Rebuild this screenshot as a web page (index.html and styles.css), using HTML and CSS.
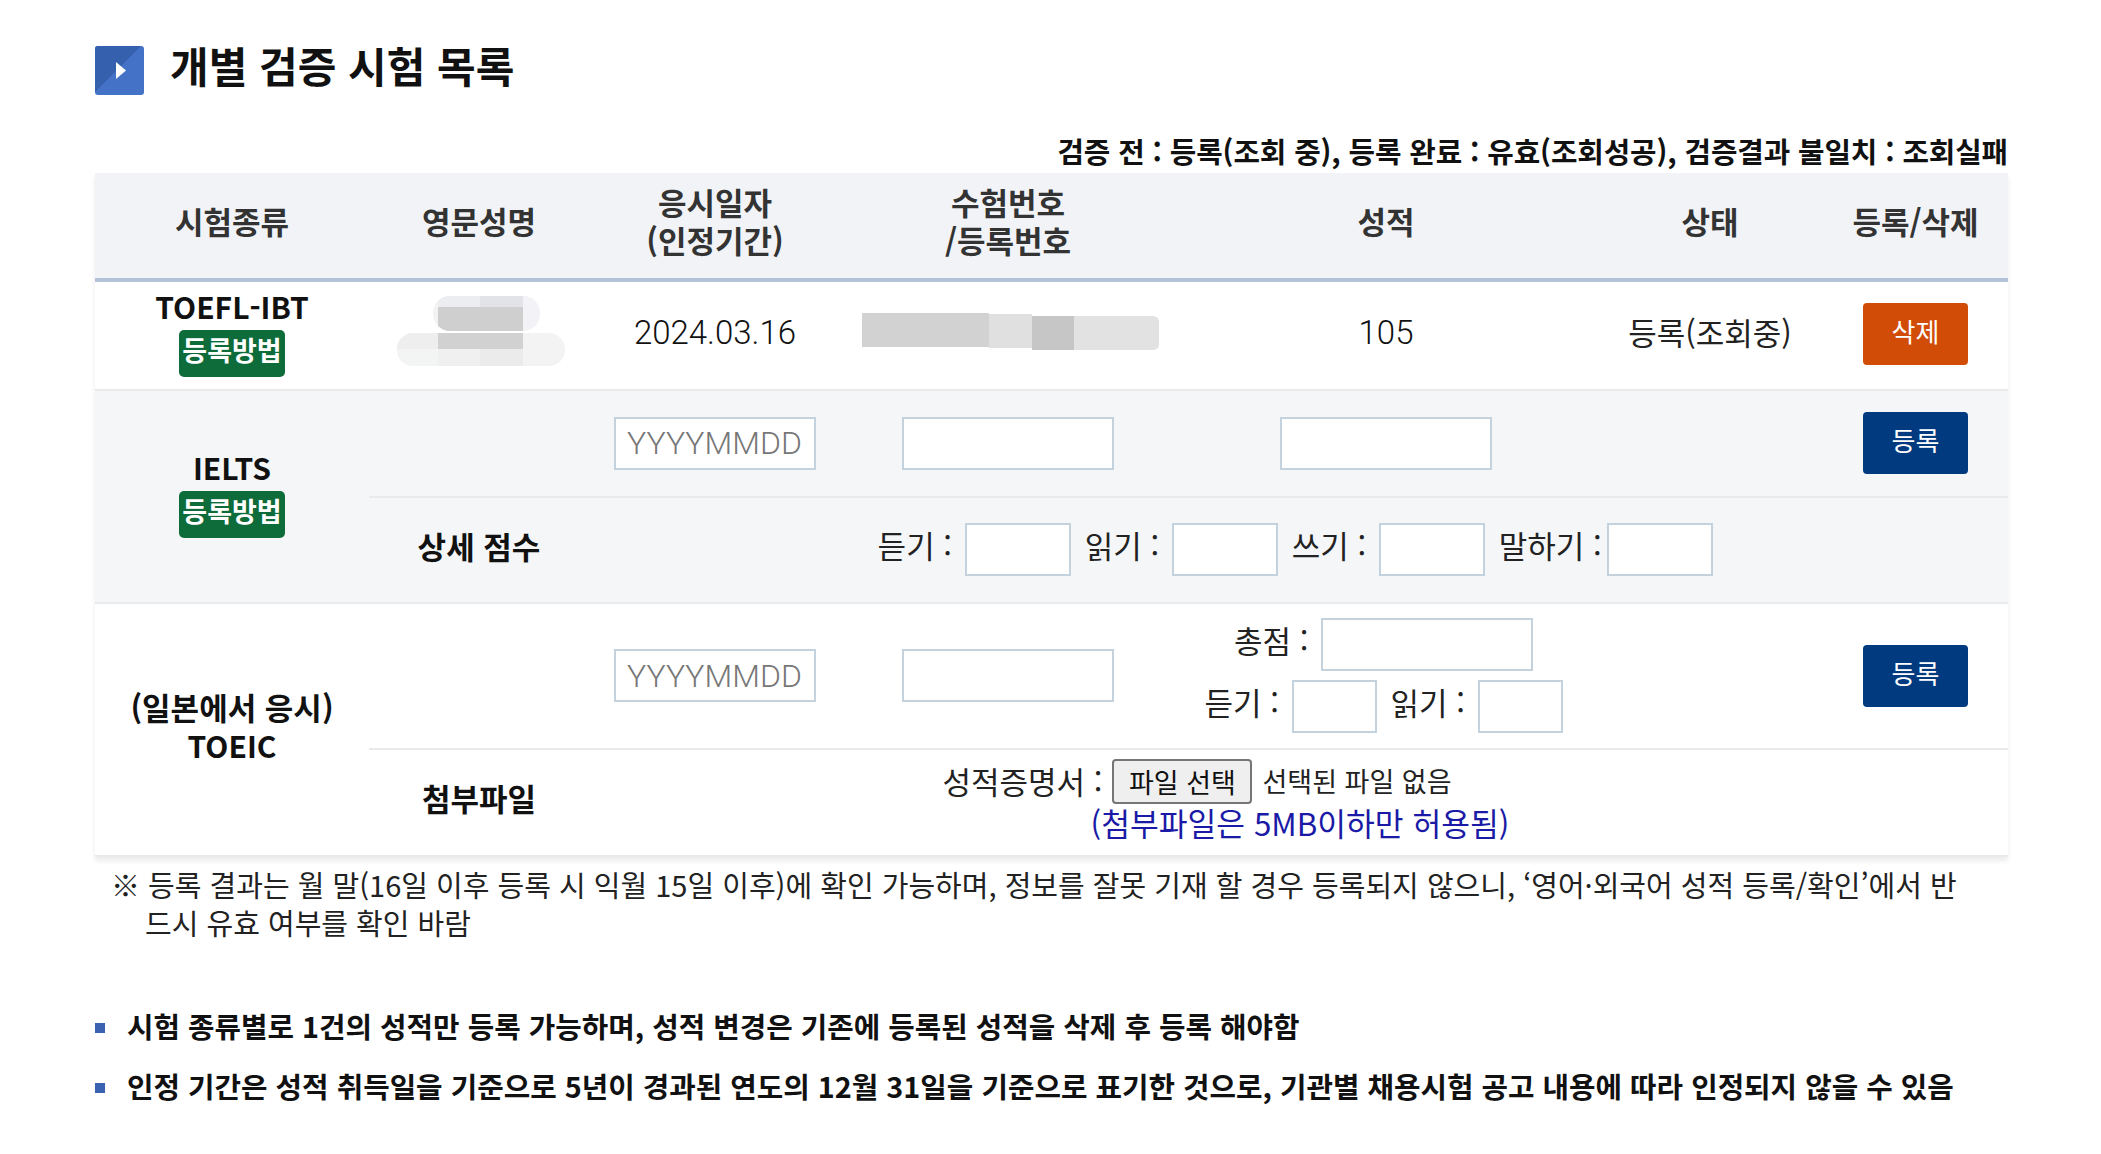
FILE: index.html
```html
<!DOCTYPE html>
<html lang="ko">
<head>
<meta charset="utf-8">
<title>개별 검증 시험 목록</title>
<link rel="stylesheet" href="styles.css">
</head>
<body>
<main class="page">
  <h2 class="title">
    <svg class="title-icon" viewBox="0 0 49 49" aria-hidden="true">
      <rect width="49" height="49" rx="3" fill="#4472c7"/>
      <path d="M3 0H46L0 46V3Q0 0 3 0Z" fill="#3560ae"/>
      <path d="M21 16L31 24.5L21 33Z" fill="#fff"/>
    </svg>
    <span class="title-text">개별 검증 시험 목록</span>
  </h2>
  <p class="legend">검증 전 : 등록(조회 중), 등록 완료 : 유효(조회성공), 검증결과 불일치 : 조회실패</p>
  <table class="grid">
    <colgroup>
      <col class="c1"><col class="c2"><col class="c3"><col class="c4"><col class="c5"><col class="c6"><col class="c7">
    </colgroup>
    <thead>
      <tr>
        <th>시험종류</th><th class="nudge">영문성명</th><th>응시일자<br>(인정기간)</th><th>수험번호<br>/등록번호</th><th>성적</th><th>상태</th><th class="nudge">등록/삭제</th>
      </tr>
    </thead>
    <tbody>
      <tr class="row-toefl">
        <td class="exam"><div>TOEFL-IBT</div><a class="how">등록방법</a></td>
        <td class="blur-cell">
          <svg class="blur-name" viewBox="0 0 168 71" aria-hidden="true">
            <defs>
              <clipPath id="nameClip"><rect x="36" y="0" width="107" height="35" rx="17"/><rect x="0" y="37" width="168" height="33" rx="16"/></clipPath>
            </defs>
            <g clip-path="url(#nameClip)">
              <rect x="0" y="0" width="168" height="71" fill="#f3f3f3"/>
              <rect x="41" y="0" width="42" height="11" fill="#ecedf1"/>
              <rect x="83" y="0" width="43" height="11" fill="#e2e3e8"/>
              <rect x="126" y="0" width="20" height="35" fill="#f3f3f7"/>
              <rect x="41" y="11" width="85" height="24" fill="#cfcfcf"/>
              <rect x="0" y="37" width="41" height="16" fill="#eeeeee"/>
              <rect x="41" y="37" width="85" height="16" fill="#d1d1d1"/>
              <rect x="0" y="53" width="41" height="18" fill="#f3f5f5"/>
              <rect x="41" y="53" width="42" height="18" fill="#f0f0f0"/>
              <rect x="83" y="53" width="43" height="18" fill="#ebebeb"/>
            </g>
          </svg>
        </td>
        <td class="txt latin">2024.03.16</td>
        <td class="blur-cell blur-right">
          <svg class="blur-num" viewBox="0 0 297 37" aria-hidden="true">
            <rect x="0" y="0" width="127" height="34" fill="#d2d2d2"/>
            <rect x="127" y="1" width="43" height="34" fill="#e0e0e0"/>
            <rect x="170" y="3" width="42" height="34" fill="#c6c6c6"/>
            <path d="M212 3H290Q297 3 297 9V31Q297 37 290 37H212Z" fill="#e2e2e2"/>
          </svg>
        </td>
        <td class="txt latin">105</td>
        <td class="txt">등록(조회중)</td>
        <td class="act act-del"><button class="btn btn-del">삭제</button></td>
      </tr>
      <tr class="shade row-ielts">
        <td class="exam" rowspan="2"><div>IELTS</div><a class="how">등록방법</a></td>
        <td></td>
        <td><input class="in in-date" placeholder="YYYYMMDD"></td>
        <td><input class="in in-wide"></td>
        <td><input class="in in-wide"></td>
        <td></td>
        <td class="act"><button class="btn btn-reg">등록</button></td>
      </tr>
      <tr class="shade sub">
        <td class="strong nudge">상세 점수</td>
        <td class="detail-cell" colspan="5">
          <div class="scores">
            <label class="score">듣기 : <input class="in in-sm"></label>
            <label class="score">읽기 : <input class="in in-sm"></label>
            <label class="score">쓰기 : <input class="in in-sm"></label>
            <label class="score tight">말하기 : <input class="in in-sm"></label>
          </div>
        </td>
      </tr>
      <tr class="row-toeic">
        <td class="exam exam-tight" rowspan="2"><div class="exam-ko">(일본에서 응시)</div><div>TOEIC</div></td>
        <td></td>
        <td><input class="in in-date" placeholder="YYYYMMDD"></td>
        <td><input class="in in-wide"></td>
        <td class="toeic-cell">
          <div class="toeic-scores">
            <label class="score">총점 : <input class="in in-wide"></label>
            <div class="scores">
              <label class="score">듣기 : <input class="in in-xs"></label>
              <label class="score">읽기 : <input class="in in-xs"></label>
            </div>
          </div>
        </td>
        <td></td>
        <td class="act"><button class="btn btn-reg">등록</button></td>
      </tr>
      <tr class="sub row-file">
        <td class="strong nudge">첨부파일</td>
        <td class="file-cell" colspan="5">
          <div class="file-line"><span>성적증명서 :</span><span class="file"><button class="file-btn">파일 선택</button><span class="file-none">선택된 파일 없음</span></span></div>
          <div class="file-note">(첨부파일은 5MB이하만 허용됨)</div>
        </td>
      </tr>
    </tbody>
  </table>
  <p class="note">※ 등록 결과는 월 말(16일 이후 등록 시 익월 15일 이후)에 확인 가능하며, 정보를 잘못 기재 할 경우 등록되지 않으니, ‘영어·외국어 성적 등록/확인’에서 반드시 유효 여부를 확인 바람</p>
  <ul class="rules">
    <li>시험 종류별로 1건의 성적만 등록 가능하며, 성적 변경은 기존에 등록된 성적을 삭제 후 등록 해야함</li>
    <li>인정 기간은 성적 취득일을 기준으로 5년이 경과된 연도의 12월 31일을 기준으로 표기한 것으로, 기관별 채용시험 공고 내용에 따라 인정되지 않을 수 있음</li>
  </ul>
</main>
</body>
</html>
```
FILE: styles.css
```css
* { box-sizing: border-box; }
html, body { margin: 0; padding: 0; background: #fff; }
body {
  font-family: "Noto Sans CJK KR", "Noto Sans", sans-serif;
  font-size: 28px;
  color: #222;
}
.page { width: 1913px; margin-left: 95px; padding-top: 46px; }
.title {
  display: flex;
  align-items: center;
  gap: 26px;
  margin: 0;
  height: 49px;
  font-size: 42px;
  font-weight: 700;
  color: #111;
}
.title-icon { width: 49px; height: 49px; flex: none; }
.title-text { margin-bottom: 12px; }
.legend {
  margin: 36px 0 0;
  height: 40px;
  box-sizing: content-box;
  padding-bottom: 2px;
  line-height: 40px;
  text-align: right;
  font-size: 28.8px;
  font-weight: 700;
  color: #111;
  letter-spacing: -0.1px;
  white-space: nowrap;
}
.grid {
  width: 1913px;
  table-layout: fixed;
  border-collapse: collapse;
  border-bottom: 2px solid #e8eaec;
  box-shadow: 0 4px 5px rgba(0,0,0,.08);
}
.c1 { width: 274px; } .c2 { width: 223px; } .c3 { width: 246px; } .c4 { width: 340px; }
.c5 { width: 416px; } .c6 { width: 232px; } .c7 { width: 182px; }
th {
  height: 107px;
  padding: 0 0 10px;
  background: #f1f3f7;
  border-bottom: 4px solid #b3c2d6;
  font-size: 31px;
  font-weight: 700;
  line-height: 38px;
  color: #333;
  text-align: center;
}
th.nudge, td.nudge { padding-right: 3px; }
td {
  padding: 0 0 1px;
  text-align: center;
  vertical-align: middle;
  border-bottom: 2px solid #e8eaec;
  line-height: 40px;
  font-size: 31px;
}
.row-toefl td { height: 110px; }
.shade td { background: #f4f6f8; height: 106px; }
.shade.row-ielts td { height: 107px; }
.row-toeic td { height: 146px; }
.row-file td { height: 107px; border-bottom: 0; }
td.txt { padding-bottom: 8px; }
td.latin { padding-bottom: 6px; font-family: Roboto, "Noto Sans CJK KR", sans-serif; font-size: 33px; font-weight: 300; color: #111; }
td.strong { padding-bottom: 9px; font-weight: 700; color: #111; }
td.exam { padding-bottom: 8px; font-weight: 700; color: #111; font-size: 30px; }
td.exam-tight { line-height: 38px; padding-bottom: 7px; }
td.toeic-cell { padding-right: 5px; }
td.detail-cell { padding-right: 9px; }
td.file-cell { padding-bottom: 3px; }
.exam-ko { font-size: 31px; }
.how {
  display: block;
  width: 106px;
  height: 47px;
  margin: 4px auto 0;
  border-radius: 5px;
  background: #0e6b3a;
  color: #fff;
  font-size: 27px;
  line-height: 40px;
  font-weight: 700;
}
td.blur-cell { padding-bottom: 9px; }
td.blur-right { padding-left: 5px; }
.blur-name { display: block; width: 168px; height: 71px; margin: 0 auto; }
.blur-num { display: block; width: 297px; height: 37px; margin: 0 auto; }
td.act { padding-right: 3px; }
td.act-del { padding-bottom: 3px; }
.btn {
  display: block;
  width: 105px;
  height: 62px;
  margin: 0 auto;
  padding: 0 0 7px;
  border: 0;
  border-radius: 4px;
  color: #fff;
  font: 400 26px "Noto Sans CJK KR", sans-serif;
}
.btn-del { background: #d14c07; }
.btn-reg { background: #023a80; }
.in {
  display: inline-block;
  height: 53px;
  padding: 0 11px;
  border: 2px solid #c4d2dd;
  border-radius: 0;
  background: #fff;
  font: 300 32px Roboto, "Noto Sans CJK KR", sans-serif;
  vertical-align: middle;
}
.in::placeholder { color: #777; }
.in-date { width: 202px; }
.in-wide { width: 212px; }
.in-sm { width: 106px; }
.in-xs { width: 85px; }
.scores { display: flex; justify-content: center; gap: 14px; align-items: center; }
.score { white-space: nowrap; }
.score .in { margin-left: 4px; }
.score.tight .in { margin-left: -3px; }
.toeic-scores { display: flex; flex-direction: column; gap: 9px; align-items: center; }
.file-line { display: flex; justify-content: center; align-items: center; gap: 10px; height: 43px; }
.file { display: flex; align-items: center; gap: 10px; width: 545px; text-align: left; font-size: 27px; }
.file-btn {
  width: 140px;
  height: 45px;
  padding: 0;
  border: 2px solid #767676;
  border-radius: 4px;
  background: #efefef;
  color: #111;
  font: 400 27px "Noto Sans CJK KR", sans-serif;
}
.file-none { white-space: nowrap; }
.file-note { color: #1a1aa6; font-size: 31.3px; }
.note {
  margin: 8px 0 0;
  padding: 0 50px 0 50px;
  text-indent: -34px;
  font-size: 29px;
  line-height: 38px;
}
.rules { list-style: none; margin: 65px 0 0; padding: 0; }
.rules li {
  position: relative;
  padding-left: 32px;
  margin-bottom: 20px;
  height: 40px;
  line-height: 40px;
  font-size: 28.8px;
  font-weight: 700;
  color: #111;
  white-space: nowrap;
}
.rules li::before {
  content: "";
  position: absolute;
  left: 0;
  top: 17px;
  width: 10px;
  height: 10px;
  background: #3a62b0;
}
```
